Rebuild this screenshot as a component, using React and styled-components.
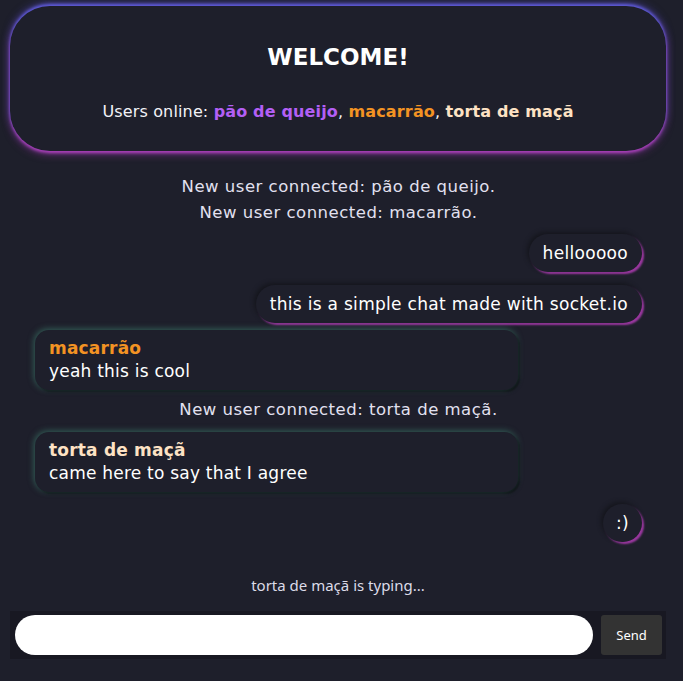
import styled, { createGlobalStyle } from 'styled-components';

const GlobalStyle = createGlobalStyle`
  html, body {
    margin: 0;
    padding: 0;
    background: #1e1f2b;
  }
  body {
    font-family: "DejaVu Sans", "Noto Sans", sans-serif;
    color: #ffffff;
  }
`;

const messages = [
  { kind: 'system', text: 'New user connected: pão de queijo.', mt: 23 },
  { kind: 'system', text: 'New user connected: macarrão.', mt: 0 },
  { kind: 'mine', text: 'hellooooo', mt: 8 },
  { kind: 'mine', text: 'this is a simple chat made with socket.io', mt: 13 },
  { kind: 'other', user: 'macarrão', color: '#f39323', text: 'yeah this is cool', mt: 7 },
  { kind: 'system', text: 'New user connected: torta de maçã.', mt: 7 },
  { kind: 'other', user: 'torta de maçã', color: '#fde2c4', text: 'came here to say that I agree', mt: 9 },
  { kind: 'mine', text: ':)', mt: 12, round: true },
];

function App() {
  return (
    <>
      <GlobalStyle />
      <Page>
        <Header>
          <Title>WELCOME!</Title>
          <Online>
            Users online: <Name $color="#b35ff5">pão de queijo</Name>,{' '}
            <Name $color="#f39323">macarrão</Name>,{' '}
            <Name $color="#fde2c4">torta de maçã</Name>
          </Online>
        </Header>

        <ChatList>
          {messages.map((m, i) => {
            if (m.kind === 'system') {
              return (
                <SystemMsg key={i} $mt={m.mt}>
                  {m.text}
                </SystemMsg>
              );
            }
            if (m.kind === 'mine') {
              return (
                <MineBubble key={i} $mt={m.mt} $round={m.round}>
                  {m.text}
                </MineBubble>
              );
            }
            return (
              <OtherBubble key={i} $mt={m.mt}>
                <Name $color={m.color}>{m.user}</Name>
                <span>{m.text}</span>
              </OtherBubble>
            );
          })}
        </ChatList>

        <Typing>torta de maçã is typing...</Typing>

        <Form onSubmit={(e) => e.preventDefault()}>
          <Input type="text" />
          <SendButton type="submit">Send</SendButton>
        </Form>
      </Page>
    </>
  );
}

const Page = styled.div`
  display: flex;
  flex-direction: column;
  padding: 6px 17px 0 10px;
`;

const Header = styled.header`
  display: flex;
  flex-direction: column;
  align-items: center;
  height: 145px;
  box-sizing: border-box;
  padding-top: 34px;
  border-radius: 40px;
  background: #1e1f2b;
  box-shadow: 0 -2px 3px #5d5ad8, 0 2px 3px #ad3fb8, 0 -3px 9px rgba(90, 90, 220, 0.55),
    0 3px 9px rgba(175, 60, 185, 0.55);
`;

const Title = styled.h1`
  margin: 0;
  font-size: 23px;
  font-weight: 700;
  line-height: 34px;
`;

const Online = styled.p`
  margin: 26px 0 0;
  font-size: 16px;
  line-height: 24px;
  letter-spacing: 0.15px;
  color: #f2f2f7;
`;

const Name = styled.b`
  display: block;
  font-weight: 700;
  letter-spacing: 0.2px;
  color: ${(p) => p.$color};
  ${Online} & {
    display: inline;
    letter-spacing: 0.15px;
  }
`;

const ChatList = styled.div`
  display: flex;
  flex-direction: column;
  padding: 0 24px 0 25px;
`;

const SystemMsg = styled.div`
  margin-top: ${(p) => p.$mt}px;
  text-align: center;
  font-size: 16.5px;
  line-height: 26px;
  letter-spacing: 0.5px;
  color: #e2e1f0;
`;

const MineBubble = styled.div`
  align-self: flex-end;
  margin-top: ${(p) => p.$mt}px;
  padding: ${(p) => (p.$round ? '7px 13px' : '7px 14px')};
  border-radius: 20px;
  font-size: 17px;
  line-height: 24px;
  letter-spacing: 0.3px;
  background: #1e1f2b;
  box-shadow: -2px -2px 4px #15161d, 2px 2px 2px #a33aa8;
`;

const OtherBubble = styled.div`
  display: flex;
  flex-direction: column;
  width: 79.5%;
  box-sizing: border-box;
  margin-top: ${(p) => p.$mt}px;
  padding: 7px 14px;
  border-radius: 14px;
  font-size: 17px;
  line-height: 23px;
  letter-spacing: 0.22px;
  background: #1e1f2b;
  box-shadow: -1px -1px 6px rgba(70, 150, 125, 0.55), 2px 2px 2px #0d0d12;
`;

const Typing = styled.div`
  margin-top: 33px;
  text-align: center;
  font-family: "Noto Sans", "Open Sans", sans-serif;
  font-size: 15px;
  line-height: 20px;
  color: #dcdbe8;
`;

const Form = styled.form`
  display: flex;
  gap: 8px;
  margin-top: 16px;
  padding: 4px 4px 4px 5px;
  background: #181822;
`;

const Input = styled.input`
  flex: 1;
  height: 40px;
  box-sizing: border-box;
  border: none;
  border-radius: 20px;
  background: #ffffff;
  outline: none;
`;

const SendButton = styled.button`
  width: 61px;
  height: 40px;
  border: none;
  border-radius: 3px;
  background: #333333;
  color: #ffffff;
  font-family: "Noto Sans", "Open Sans", sans-serif;
  font-size: 13px;
`;

export default App;
